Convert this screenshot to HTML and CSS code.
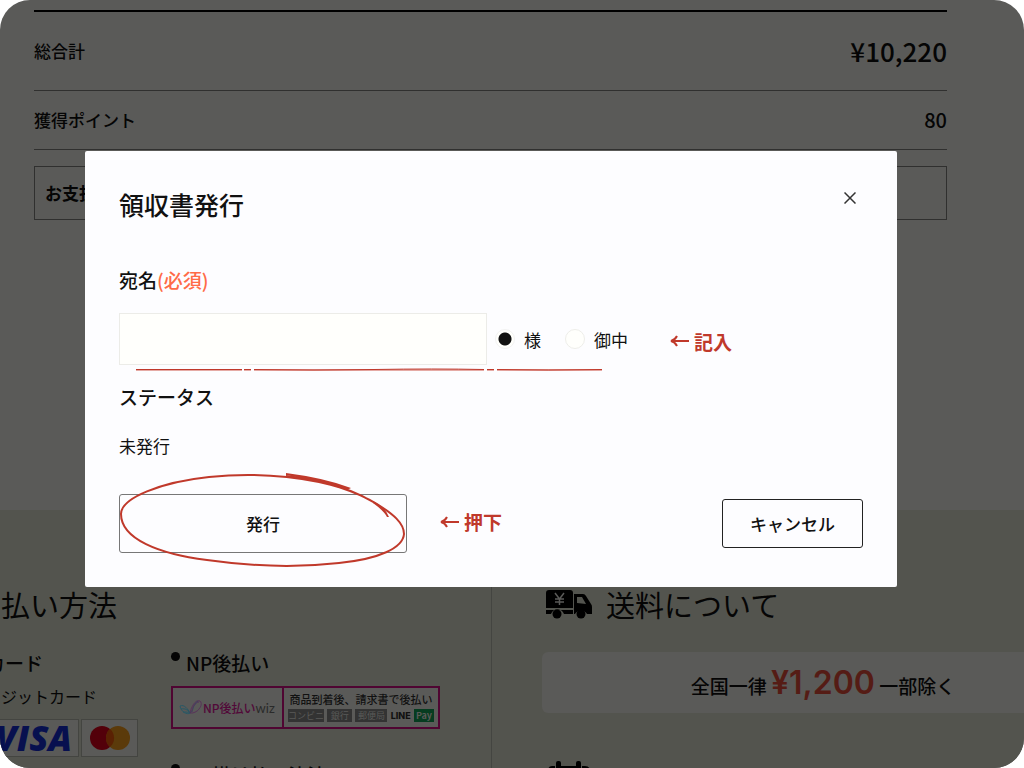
FILE: index.html
```html
<!DOCTYPE html>
<html lang="ja">
<head>
    <meta charset="UTF-8">
    <meta name="viewport" content="width=device-width, initial-scale=1.0">
    <title>領収書発行</title>
    <link rel="stylesheet" href="styles.css">
</head>
<body>

    <div class="screen">
        <main class="summary">
            <dl class="totals">
                <div class="total-row total-row-grand">
                    <dt>総合計</dt>
                    <dd>¥10,220</dd>
                </div>
                <div class="total-row">
                    <dt>獲得ポイント</dt>
                    <dd>80</dd>
                </div>
            </dl>
            <div class="payment-box">お支払い方法</div>
        </main>

        <footer class="guide">
            <section class="guide-payment">
                <h2>払い方法</h2>
                <div class="payment-columns">
                    <div class="payment-card">
                        <h3>カード</h3>
                        <p>クレジットカード</p>
                        <div class="brands">
                            <span class="brand brand-visa">VISA</span>
                            <span class="brand">
                                <svg width="40" height="24" viewBox="0 0 40 24">
                                    <circle cx="12" cy="12" r="12" fill="#53000a"/>
                                    <circle cx="28" cy="12" r="12" fill="#5b3a0a"/>
                                    <path d="M20 3a12 12 0 0 1 0 18a12 12 0 0 1 0-18z" fill="#5a2103"/>
                                </svg>
                            </span>
                        </div>
                    </div>
                    <div class="payment-np">
                        <h3>NP後払い</h3>
                        <div class="np-banner">
                            <div class="np-logo">
                                <svg width="24" height="16" viewBox="0 0 24 16" fill="none" stroke-width="1">
                                    <path d="M1 6c1 6 7 9 10 7c4-2 2-8 8-12M1 6c4-2 8 3 10 7M2 9c4-1 7 1 9 4M4 12c3 0 5 0 7 1" stroke="#285866"/>
                                    <path d="M11 13c1-5 5-14 10-12c4 3-2 13-10 12M13 12c0-5 4-10 7-10" stroke="#59335a"/>
                                </svg>
                                <span class="np-name">NP後払い</span><span class="np-wiz">wiz</span>
                            </div>
                            <div class="np-detail">
                                <p>商品到着後、請求書で後払い</p>
                                <div class="np-tags">
                                    <span class="tag-store">コンビニ</span>
                                    <span class="tag-bank">銀行</span>
                                    <span class="tag-post">郵便局</span>
                                    <b>LINE</b>
                                    <span class="tag-pay">Pay</span>
                                </div>
                            </div>
                        </div>
                        <h3>NP掛け払い決済</h3>
                    </div>
                </div>
            </section>

            <section class="guide-shipping">
                <h2>
                    <svg width="46" height="30" viewBox="0 0 46 30">
                        <path d="M3 1h21q3 0 3 3v15H0V4q0-3 3-3zM0 21h27v4h-9a7 7 0 0 0-13 0H0zM28 5h9q2 0 3 2l5 8q1 1 1 3v7h-5a7 7 0 0 0-12 0h-1z"/>
                        <path d="M31 8h5l4 7l-9-1z" fill="#53544e"/>
                        <circle cx="11" cy="25" r="4.500"/>
                        <circle cx="35" cy="25" r="4.500"/>
                        <path d="M9 4l4.500 6L18 4M13.500 10v6M9 10h9M9 13h9" fill="none" stroke="#5a5a58" stroke-width="1.500"/>
                    </svg>
                    送料について
                </h2>
                <div class="shipping-fee">全国一律 <strong>¥1,200</strong> 一部除く</div>
                <svg class="calendar" width="42" height="36" viewBox="0 0 42 36">
                    <path d="M4 5h3v3q3 2 6 0V5h15v3q3 2 6 0V5h3q5 0 5 5v26H0V10q0-5 4-5z"/>
                    <rect x="8" y="0" width="5" height="9" rx="2"/>
                    <rect x="28" y="0" width="5" height="9" rx="2"/>
                </svg>
            </section>
        </footer>

        <div class="overlay">
            <form class="dialog" role="dialog" aria-labelledby="dialog-title">
                <div class="dialog-header">
                    <h1 id="dialog-title">領収書発行</h1>
                    <button type="button" class="close" aria-label="閉じる">
                        <svg width="12" height="12" viewBox="0 0 12 12">
                            <path d="M.5.5l11 11M11.500.5l-11 11" stroke="#333" stroke-width="1.500"/>
                        </svg>
                    </button>
                </div>

                <label class="field-label" for="name">宛名<span class="required">(必須)</span></label>
                <div class="name-row">
                    <input type="text" id="name" class="name-input">
                    <label class="choice"><input type="radio" name="honorific" checked>様</label>
                    <label class="choice"><input type="radio" name="honorific">御中</label>
                    <span class="note note-name">
                        <svg width="19" height="12" viewBox="0 0 19 12"><path d="M19 6H2M7 1Q5 5 1 6Q5 7 7 11"/></svg>
                        記入
                    </span>
                    <svg class="underline" width="466" height="4" viewBox="0 0 466 4">
                        <path d="M0 2H106M108 2H115M118 2H348M351 2H358M361 2H466" stroke="#dd8f88" stroke-width="1.500"/>
                        <path d="M0 1.500h106M108 1.500h7M118 1.500q60 1 120 0t110 0M351 1.500h7M361 1.500q50 1 105 0" stroke="#c0392b" fill="none"/>
                    </svg>
                </div>

                <h2 class="field-label status-label">ステータス</h2>
                <p class="status">未発行</p>

                <div class="actions">
                    <button type="button" class="btn btn-issue">発行</button>
                    <span class="note note-issue">
                        <svg width="19" height="12" viewBox="0 0 19 12"><path d="M19 6H2M7 1Q5 5 1 6Q5 7 7 11"/></svg>
                        押下
                    </span>
                    <button type="button" class="btn btn-cancel">キャンセル</button>
                    <svg class="circle" width="288" height="96" viewBox="0 0 288 96">
                        <path d="M167 3C206 7 240 20 258 31C274 41 285 50 285 61C284 75 260 86 220 90C176 95 130 93 88 87C40 81 2 66 2 41C2 25 42 9 90 4C128 0 165 2 200 9C225 14 243 22 256 30" fill="none" stroke="#c0392b" stroke-width="2"/>
                        <path d="M167 0Q206 5 232 15L228 17Q200 8 167 2zM254 28Q267 35 270 44L268 44Q265 38 254 30z" fill="#c0392b"/>
                    </svg>
                </div>
            </form>
        </div>
    </div>

</body>
</html>
```
FILE: styles.css
```css
* {
    box-sizing: border-box;
}
body {
    margin: 0;
    background-color: #fff;
    font-family: "Noto Sans CJK JP", "Noto Sans", sans-serif;
    color: #111;
}
h1, h2, h3, p, dl, dd {
    margin: 0;
}
.screen {
    position: relative;
    display: flex;
    flex-direction: column;
    height: 100vh;
    overflow: hidden;
    border-radius: 30px;
    background-color: #5a5a58;
}

/* Order summary */
.summary {
    flex-shrink: 0;
    padding: 10px 77px 290px 34px;
    color: #050505;
}
.totals {
    border-top: 2px solid #000;
}
.total-row {
    display: flex;
    justify-content: space-between;
    align-items: center;
    height: 59px;
    padding-bottom: 2px;
    border-bottom: 1px solid #30302f;
    font-size: 17px;
    font-weight: 500;
}
.total-row dd {
    font-size: 20px;
}
.total-row-grand {
    height: 79px;
}
.total-row-grand dd {
    font-size: 26px;
}
.payment-box {
    margin-top: 16px;
    padding: 0 10px;
    border: 1px solid #30302f;
    font-size: 17px;
    font-weight: 700;
    line-height: 52px;
}

/* Shopping guide */
.guide {
    flex: 1 0 auto;
    display: grid;
    grid-template-columns: 491fr 533fr;
    background-color: #53544e;
    color: #050505;
}
.guide h2 {
    display: flex;
    align-items: center;
    gap: 14px;
    font-size: 29px;
    font-weight: 400;
    line-height: 30px;
}
.guide h3 {
    font-size: 19px;
    font-weight: 500;
    line-height: 28px;
}
.guide-payment {
    padding: 79px 0 0 1px;
}
.payment-columns {
    display: flex;
    gap: 33px;
    margin: 30px 0 0 -35px;
}
.payment-card {
    width: 172px;
    white-space: nowrap;
}
.payment-card h3 {
    padding-left: 20px;
}
.payment-card p {
    margin-top: 5px;
    padding-left: 3px;
    font-size: 16px;
    line-height: 28px;
}
.brands {
    display: flex;
    justify-content: flex-end;
    gap: 2px;
    margin-top: 9px;
}
.brand {
    display: flex;
    align-items: center;
    justify-content: center;
    width: 57px;
    height: 38px;
    border: 1px solid #444541;
    background-color: #5a5a58;
}
.brand-visa {
    justify-content: flex-end;
    width: 86px;
    padding-right: 6px;
    color: #07104f;
    font-family: "Open Sans", sans-serif;
    font-size: 35px;
    font-style: italic;
    font-weight: 800;
    line-height: 36px;
}
.payment-np h3 {
    position: relative;
    padding-left: 15px;
}
.payment-np h3::before {
    content: "";
    position: absolute;
    top: 3px;
    left: 0;
    width: 9px;
    height: 9px;
    border-radius: 50%;
    background-color: #050505;
}
.np-banner {
    display: flex;
    width: 269px;
    height: 43px;
    margin: 9px 0 32px;
    border: 2px solid #4f0532;
    background-color: #5a5a58;
    white-space: nowrap;
}
.np-logo {
    display: flex;
    align-items: center;
    width: 111px;
    padding-left: 6px;
    border-right: 2px solid #4f0532;
}
.np-name {
    color: #520939;
    font-size: 12px;
    font-weight: 500;
}
.np-wiz {
    color: #2a2a2a;
    font-family: Lato, sans-serif;
    font-size: 13px;
}
.np-detail {
    flex: 1;
    padding: 2px 4px;
    color: #111;
}
.np-detail p {
    font-size: 11px;
    font-weight: 500;
    line-height: 18px;
    text-align: center;
}
.np-tags {
    display: flex;
    justify-content: space-between;
    margin-top: 1px;
    font-size: 9px;
    line-height: 13px;
    text-align: center;
}
.np-tags span {
    background-color: #333;
    color: #5a5a58;
}
.np-tags .tag-store {
    width: 36px;
}
.np-tags .tag-bank {
    width: 25px;
}
.np-tags .tag-post {
    width: 32px;
}
.np-tags b {
    font-family: Inter, sans-serif;
    font-weight: 800;
}
.np-tags .tag-pay {
    width: 20px;
    background-color: #063c20;
    font-weight: 700;
}
.guide-shipping {
    padding: 79px 0 0 50px;
    border-left: 1px solid #444541;
}
.guide-shipping h2 {
    padding-left: 4px;
}
.shipping-fee {
    height: 61px;
    margin: 33px -80px 0 0;
    border-radius: 6px;
    background-color: #5a5a58;
    font-size: 19px;
    font-weight: 500;
    line-height: 61px;
    text-align: center;
}
.shipping-fee strong {
    color: #551c15;
    font-family: Inter, sans-serif;
    font-size: 32px;
    font-weight: 600;
}
.calendar {
    display: block;
    margin: 48px 0 0 6px;
}

/* Receipt dialog */
.overlay {
    position: absolute;
    inset: 0;
    display: flex;
    justify-content: center;
    align-items: flex-start;
    padding: 151px 42px 0 0;
}
.dialog {
    width: 100%;
    max-width: 812px;
    padding: 34px;
    border-radius: 2px;
    background-color: #fdfdff;
}
.dialog-header {
    display: flex;
    justify-content: space-between;
    align-items: flex-start;
}
.dialog-header h1 {
    font-size: 25px;
    font-weight: 500;
    line-height: 38px;
}
.close {
    display: flex;
    align-items: center;
    justify-content: center;
    width: 26px;
    height: 26px;
    padding: 0;
    border: 0;
    background: none;
}
.field-label {
    display: block;
    margin-top: 43px;
    font-size: 19px;
    font-weight: 500;
    line-height: 28px;
}
.required {
    color: #ff6b47;
}
.name-row {
    position: relative;
    display: flex;
    align-items: center;
    margin-top: 19px;
}
.name-input {
    width: 368px;
    height: 52px;
    margin-right: 8px;
    padding: 0 12px;
    border: 1px solid #ecece8;
    background-color: #fffffc;
    font: inherit;
    font-size: 17px;
}
.choice {
    display: flex;
    align-items: center;
    gap: 9px;
    margin-right: 24px;
    font-size: 17px;
}
.choice input {
    appearance: none;
    width: 20px;
    height: 20px;
    margin: 0;
    border: 1px solid #eeeeea;
    border-radius: 50%;
    background-color: #fffffc;
}
.choice input:checked {
    border-color: #f2f2f2;
    background-image: radial-gradient(circle, #111 6px, transparent 7px);
}

/* Handwritten-style notes */
.note {
    display: flex;
    align-items: center;
    gap: 5px;
    color: #c0392b;
    font-size: 19px;
    font-weight: 700;
}
.note path {
    fill: none;
    stroke: #c0392b;
    stroke-width: 2;
}
.note-name {
    margin-left: 18px;
    padding-top: 4px;
}
.underline {
    position: absolute;
    top: 55px;
    left: 17px;
}
.status-label {
    margin-top: 18px;
}
.status {
    margin-top: 21px;
    font-size: 17px;
    line-height: 28px;
}
.actions {
    position: relative;
    display: flex;
    align-items: center;
    margin-top: 34px;
}
.btn {
    border: 1px solid #222;
    border-radius: 3px;
    background-color: transparent;
    color: #111;
    font-family: inherit;
    font-size: 17px;
    font-weight: 500;
}
.btn-issue {
    width: 288px;
    height: 59px;
    border-color: #777;
}
.btn-cancel {
    width: 141px;
    height: 49px;
    margin-left: auto;
}
.note-issue {
    margin-left: 33px;
    padding-bottom: 4px;
}
.circle {
    position: absolute;
    top: -21px;
    left: 0;
    pointer-events: none;
}
```
